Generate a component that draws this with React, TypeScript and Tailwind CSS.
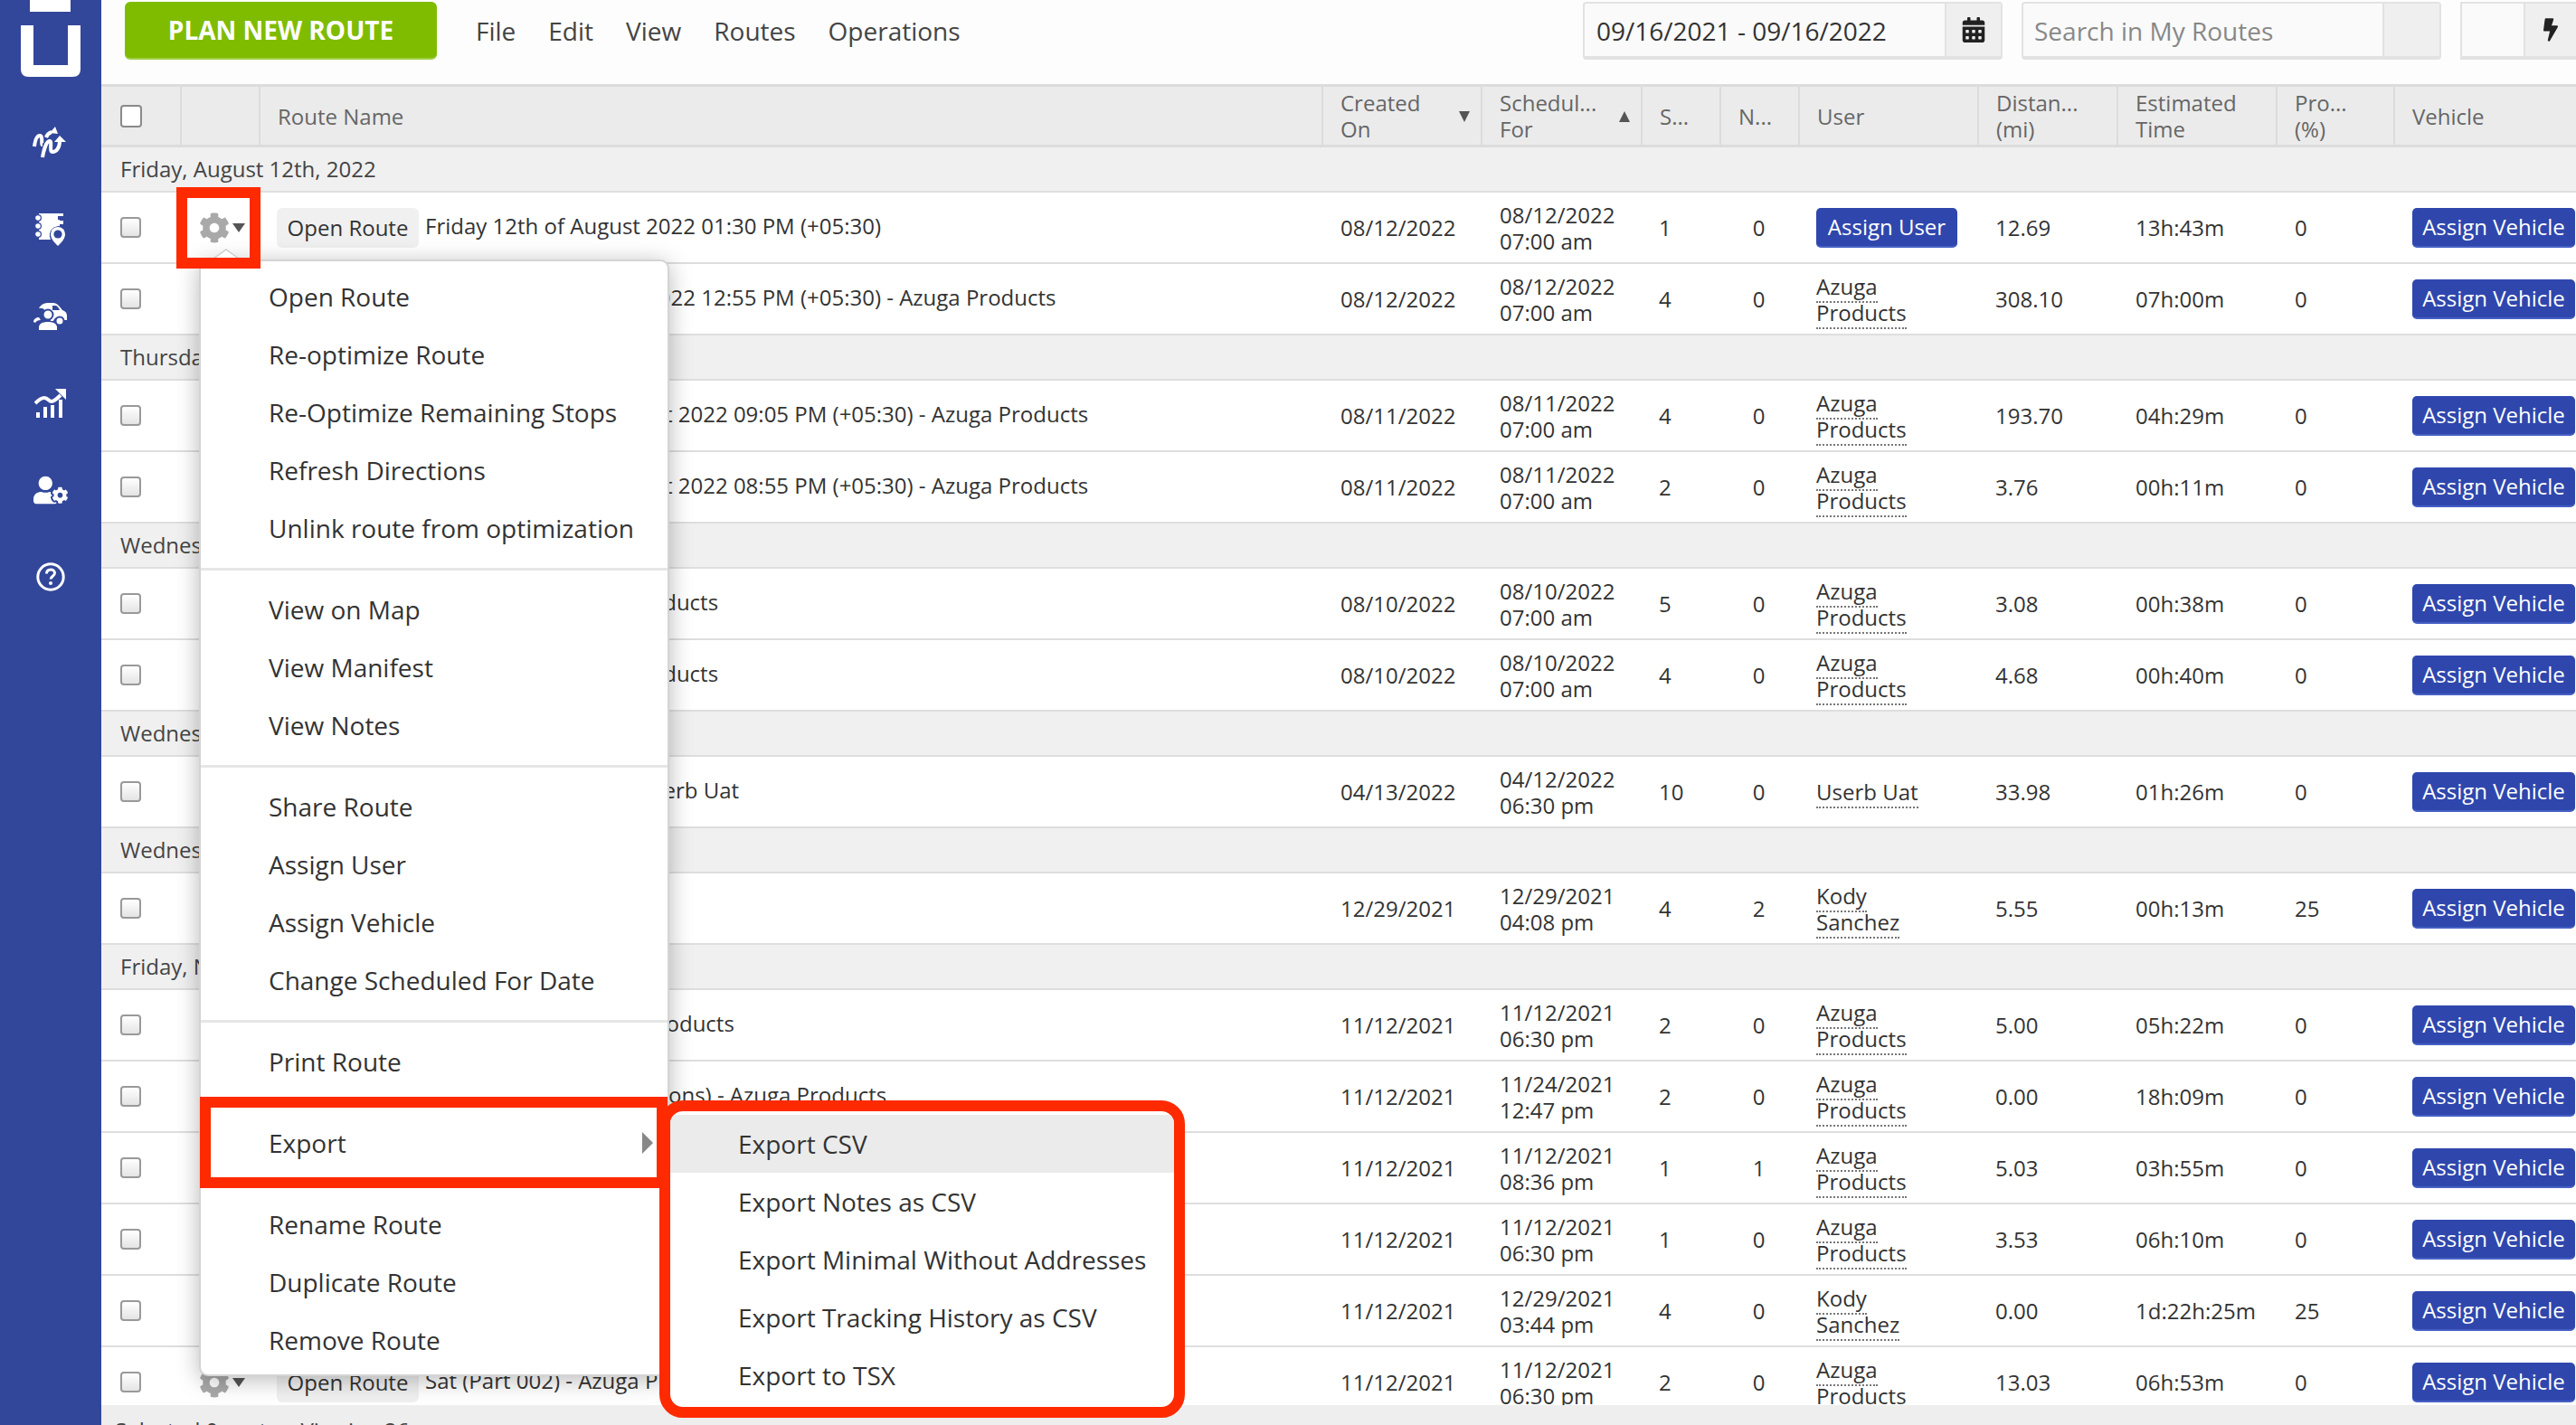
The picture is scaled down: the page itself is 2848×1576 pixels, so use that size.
import { FaBolt, FaCalendarAlt, FaCog, FaUserCog } from "react-icons/fa";

interface Route {
  name: string;
  created: string;
  date: string;
  time: string;
  stops: number;
  notes: number;
  user: string[] | null;
  distance: string;
  eta: string;
  progress: number;
}

interface Group {
  label: string;
  routes: Route[];
}

const AZUGA = ["Azuga", "Products"];
const KODY = ["Kody", "Sanchez"];

const groups: Group[] = [
  {
    label: "Friday, August 12th, 2022",
    routes: [
      { name: "Friday 12th of August 2022 01:30 PM (+05:30)", created: "08/12/2022", date: "08/12/2022", time: "07:00 am", stops: 1, notes: 0, user: null, distance: "12.69", eta: "13h:43m", progress: 0 },
      { name: "Friday 12th of August 2022 12:55 PM (+05:30) - Azuga Products", created: "08/12/2022", date: "08/12/2022", time: "07:00 am", stops: 4, notes: 0, user: AZUGA, distance: "308.10", eta: "07h:00m", progress: 0 },
    ],
  },
  {
    label: "Thursday, August 11th, 2022",
    routes: [
      { name: "Thursday 11th of August 2022 09:05 PM (+05:30) - Azuga Products", created: "08/11/2022", date: "08/11/2022", time: "07:00 am", stops: 4, notes: 0, user: AZUGA, distance: "193.70", eta: "04h:29m", progress: 0 },
      { name: "Thursday 11th of August 2022 08:55 PM (+05:30) - Azuga Products", created: "08/11/2022", date: "08/11/2022", time: "07:00 am", stops: 2, notes: 0, user: AZUGA, distance: "3.76", eta: "00h:11m", progress: 0 },
    ],
  },
  {
    label: "Wednesday, August 10th, 2022",
    routes: [
      { name: "Wed (Part1) - Azuga Products", created: "08/10/2022", date: "08/10/2022", time: "07:00 am", stops: 5, notes: 0, user: AZUGA, distance: "3.08", eta: "00h:38m", progress: 0 },
      { name: "Wed (Part2) - Azuga Products", created: "08/10/2022", date: "08/10/2022", time: "07:00 am", stops: 4, notes: 0, user: AZUGA, distance: "4.68", eta: "00h:40m", progress: 0 },
    ],
  },
  {
    label: "Wednesday, April 13th, 2022",
    routes: [
      { name: "Wed Apr 13th 2022 - Userb Uat", created: "04/13/2022", date: "04/12/2022", time: "06:30 pm", stops: 10, notes: 0, user: ["Userb Uat"], distance: "33.98", eta: "01h:26m", progress: 0 },
    ],
  },
  {
    label: "Wednesday, December 29th, 2021",
    routes: [
      { name: "Wed Dec 29th", created: "12/29/2021", date: "12/29/2021", time: "04:08 pm", stops: 4, notes: 2, user: KODY, distance: "5.55", eta: "00h:13m", progress: 25 },
    ],
  },
  {
    label: "Friday, November 12th, 2021",
    routes: [
      { name: "Fri (Route 01) - Azuga Products", created: "11/12/2021", date: "11/12/2021", time: "06:30 pm", stops: 2, notes: 0, user: AZUGA, distance: "5.00", eta: "05h:22m", progress: 0 },
      { name: "Fri Route (Optimize Options) - Azuga Products", created: "11/12/2021", date: "11/24/2021", time: "12:47 pm", stops: 2, notes: 0, user: AZUGA, distance: "0.00", eta: "18h:09m", progress: 0 },
      { name: "Fri (Part 03) - Azuga Products", created: "11/12/2021", date: "11/12/2021", time: "08:36 pm", stops: 1, notes: 1, user: AZUGA, distance: "5.03", eta: "03h:55m", progress: 0 },
      { name: "Fri (Part 04) - Azuga Products", created: "11/12/2021", date: "11/12/2021", time: "06:30 pm", stops: 1, notes: 0, user: AZUGA, distance: "3.53", eta: "06h:10m", progress: 0 },
      { name: "Fri (Part 05) - Azuga Products", created: "11/12/2021", date: "12/29/2021", time: "03:44 pm", stops: 4, notes: 0, user: KODY, distance: "0.00", eta: "1d:22h:25m", progress: 25 },
      { name: "Sat (Part 002) - Azuga Products", created: "11/12/2021", date: "11/12/2021", time: "06:30 pm", stops: 2, notes: 0, user: AZUGA, distance: "13.03", eta: "06h:53m", progress: 0 },
    ],
  },
];

const menuSections = [
  ["Open Route", "Re-optimize Route", "Re-Optimize Remaining Stops", "Refresh Directions", "Unlink route from optimization"],
  ["View on Map", "View Manifest", "View Notes"],
  ["Share Route", "Assign User", "Assign Vehicle", "Change Scheduled For Date"],
  ["Print Route"],
  ["Export"],
  ["Rename Route", "Duplicate Route", "Remove Route"],
];

const exportItems = ["Export CSV", "Export Notes as CSV", "Export Minimal Without Addresses", "Export Tracking History as CSV", "Export to TSX"];

const GRID = "grid grid-cols-[87px_87px_1175px_176px_177px_87px_87px_198px_154px_176px_130px_202px]";

function Checkbox({ header }: { header?: boolean }) {
  return (
    <span
      className={
        header
          ? "block w-[24px] h-[25px] rounded-[4px] border-2 border-[#8a8a8a] bg-white"
          : "block w-[23px] h-[23px] rounded-[4px] border-2 border-[#999] bg-gradient-to-b from-white to-[#e4e4e4]"
      }
    />
  );
}

function SortCaret({ up }: { up?: boolean }) {
  return (
    <svg width="14" height="14" viewBox="0 0 14 14" className="shrink-0 mt-[2px]">
      <path d={up ? "M7 1l6 12H1z" : "M1 1h12L7 13z"} fill="#555" />
    </svg>
  );
}

function HeaderCell({ lines, caret }: { lines: string[]; caret?: "up" | "down" }) {
  return (
    <div className="flex items-center justify-between pl-[19px] pr-[11px] border-l-2 border-[#dcdcdc] leading-[29px]">
      <div>
        {lines.map((line) => (
          <div key={line} className="whitespace-nowrap">{line}</div>
        ))}
      </div>
      {caret && <SortCaret up={caret === "up"} />}
    </div>
  );
}

function RouteRow({ route }: { route: Route }) {
  return (
    <div className={`${GRID} h-[79px] bg-white border-b-2 border-[#dedede] text-[#333] leading-[29px] items-center`}>
      <div className="pl-[21px]">
        <Checkbox />
      </div>
      <div className="flex items-center pl-[21px]">
        <FaCog className="text-[#a9a9a9] w-[34px] h-[34px]" />
        <svg width="14" height="10" viewBox="0 0 14 10" className="ml-[3px]">
          <path d="M0 0h14L7 10z" fill="#555" />
        </svg>
      </div>
      <div className="flex items-center pl-[20px] whitespace-nowrap overflow-hidden">
        <span className="h-[44px] w-[157px] flex items-center justify-center rounded-[6px] bg-[#f0f0f0]">Open Route</span>
        <span className="ml-[7px] mb-[5px]">{route.name}</span>
      </div>
      <div className="pl-[21px]">{route.created}</div>
      <div className="pl-[21px]">
        {route.date}
        <br />
        {route.time}
      </div>
      <div className="pl-[20px]">{route.stops}</div>
      <div className="text-center">{route.notes}</div>
      <div className="pl-[20px]">
        {route.user ? (
          route.user.map((part, i) => (
            <span key={part}>
              <span className="border-b-2 border-dotted border-[#777]">{part}</span>
              {i < route.user!.length - 1 && <br />}
            </span>
          ))
        ) : (
          <span className="flex items-center justify-center w-[156px] h-[44px] rounded-[5px] bg-[#2f47ad] border-b-2 border-[#4560c4] text-white">
            Assign User
          </span>
        )}
      </div>
      <div className="pl-[20px]">{route.distance}</div>
      <div className="pl-[21px] whitespace-nowrap">{route.eta}</div>
      <div className="pl-[21px]">{route.progress}</div>
      <div className="pl-[21px]">
        <span className="flex items-center justify-center w-[180px] h-[44px] rounded-[5px] bg-[#2f47ad] border-b-2 border-[#4560c4] text-white whitespace-nowrap">
          Assign Vehicle
        </span>
      </div>
    </div>
  );
}

function RoutesIcon() {
  return (
    <svg width="40" height="36" viewBox="0 0 40 36" fill="none" stroke="white" strokeWidth="4">
      <path d="M2 22c1-8 3-12 6-12 4 0 1 10 3 10" />
      <path d="M11 34c1-6 4-18 8-18 3 0 -1 12 3 12 4 0 8-4 8-12" />
      <path d="M15 12c1-3 3-5 6-6" />
      <path d="M19 7l6-7 3 8z" fill="white" stroke="none" />
      <path d="M24 17l6-7 7 7z" fill="white" stroke="none" />
    </svg>
  );
}

function NotebookPinIcon() {
  return (
    <svg width="36" height="36" viewBox="0 0 36 36">
      <path d="M5 0h23v14c-7 0-12 5-11 12l1 3H5z" fill="white" />
      <circle cx="4" cy="5" r="3.4" fill="white" stroke="#32479a" strokeWidth="1.2" />
      <circle cx="4" cy="14" r="3.4" fill="white" stroke="#32479a" strokeWidth="1.2" />
      <circle cx="4" cy="23" r="3.4" fill="white" stroke="#32479a" strokeWidth="1.2" />
      <rect x="26" y="3" width="5" height="4" fill="#32479a" />
      <rect x="28" y="0" width="4" height="3" fill="white" />
      <rect x="28" y="8" width="4" height="4" fill="white" />
      <path d="M26 36c-4-4-8-8-8-13a8 8 0 0 1 16 0c0 5-4 9-8 13z" fill="white" />
      <circle cx="26" cy="23" r="4.6" fill="#32479a" />
    </svg>
  );
}

function DriverCarIcon() {
  return (
    <svg width="38" height="32" viewBox="0 0 38 32">
      <path d="M6 7c2-4 6-6 10-6h6c4 0 7 4 10 8 3 1 5 3 5 6v5h-4a6 6 0 0 0-11 1h-3c0-3-2-6-5-7 0-5-3-8-8-7z" fill="white" />
      <path d="M21 4h3c2 0 4 2 5 5h-8z" fill="#32479a" />
      <circle cx="16" cy="14" r="5.5" fill="white" stroke="#32479a" strokeWidth="2" />
      <path d="M6 31v-3c0-4 4-6 10-6s10 2 10 6v3z" fill="white" />
      <path d="M0 22c0-3 3-5 6-5 1 1 1 2 2 3-3 0-5 1-6 3z" fill="white" />
      <circle cx="29" cy="21" r="4.5" fill="white" stroke="#32479a" strokeWidth="2" />
    </svg>
  );
}

function GrowthIcon() {
  return (
    <svg width="36" height="32" viewBox="0 0 36 32">
      <path d="M1 16c5-5 7-6 10-6 4 0 5 4 8 4 3 0 6-3 10-7" fill="none" stroke="white" strokeWidth="4" />
      <path d="M23 0h12v12z" fill="white" />
      <rect x="2" y="26" width="4" height="6" fill="white" />
      <rect x="10" y="20" width="4" height="12" fill="white" />
      <rect x="18" y="18" width="4" height="14" fill="white" />
      <rect x="27" y="12" width="4" height="20" fill="white" />
    </svg>
  );
}

function HelpIcon() {
  return (
    <svg width="32" height="32" viewBox="0 0 32 32" fill="none" stroke="white">
      <circle cx="16" cy="16" r="14.2" strokeWidth="3" />
      <path d="M11.5 12.5c0-3 2-4.500 4.600-4.500s4.400 1.600 4.400 3.800c0 3.400-4.400 3.400-4.400 6.700" strokeWidth="3" />
      <circle cx="16" cy="23" r="2" fill="white" stroke="none" />
    </svg>
  );
}

function Sidebar() {
  return (
    <aside className="w-[112px] shrink-0 bg-[#32479a] flex flex-col items-center">
      <svg width="112" height="100" viewBox="0 0 112 100" className="shrink-0">
        <path d="M33 0h45v13H33z" fill="white" />
        <path d="M23 28h14v44h38V28h14v48c0 6-3 9-9 9H32c-6 0-9-3-9-9z" fill="white" />
      </svg>
      <div className="flex flex-col items-center mt-[10px]">
        <div className="h-[96px] flex items-center"><RoutesIcon /></div>
        <div className="h-[96px] flex items-center"><NotebookPinIcon /></div>
        <div className="h-[96px] flex items-center"><DriverCarIcon /></div>
        <div className="h-[96px] flex items-center"><GrowthIcon /></div>
        <div className="h-[96px] flex items-center"><FaUserCog className="text-white w-[38px] h-[32px]" /></div>
        <div className="h-[96px] flex items-center"><HelpIcon /></div>
      </div>
    </aside>
  );
}

function TopBar() {
  return (
    <div className="h-[93px] shrink-0 flex items-start pt-[2px] bg-[#fdfdfd] text-[28px] text-[#444]">
      <button className="ml-[26px] w-[345px] h-[64px] rounded-[6px] bg-[#7fbc00] text-white font-bold border-b-2 border-[#9fce4a]">
        PLAN NEW ROUTE
      </button>
      <nav className="ml-[43px] h-[64px] flex items-center gap-[36px]">
        <span>File</span>
        <span>Edit</span>
        <span>View</span>
        <span>Routes</span>
        <span>Operations</span>
      </nav>
      <div className="ml-auto flex">
        <div className="flex h-[64px] border-2 border-b-4 border-[#e2e2e2] rounded-[4px] bg-[#fafafa]">
          <div className="w-[398px] pl-[13px] pt-[2px] flex items-center text-[#333]">09/16/2021 - 09/16/2022</div>
          <div className="w-[62px] flex items-center justify-center bg-[#efefef] border-l-2 border-[#e2e2e2]">
            <FaCalendarAlt className="w-[26px] h-[28px] text-[#222]" />
          </div>
        </div>
        <div className="ml-[21px] flex h-[64px] border-2 border-b-4 border-[#e2e2e2] rounded-[4px] bg-[#fafafa]">
          <div className="w-[397px] pl-[12px] pt-[2px] flex items-center text-[#888]">Search in My Routes</div>
          <div className="w-[63px] bg-[#efefef] border-l-2 border-[#e2e2e2]" />
        </div>
        <div className="ml-[21px] flex h-[64px] w-[128px] border-y-2 border-l-2 border-b-4 border-[#e2e2e2] bg-[#fafafa]">
          <div className="w-[68px]" />
          <div className="flex-1 flex items-center justify-center bg-[#efefef] border-l-2 border-[#e2e2e2]">
            <FaBolt className="w-[16px] h-[28px] text-[#222]" />
          </div>
        </div>
      </div>
    </div>
  );
}

function RouteTable() {
  return (
    <div className="flex-1 min-h-0 overflow-hidden text-[24px]">
      <div className={`${GRID} h-[70px] bg-[#ebebeb] border-y-[3px] border-[#dcdcdc] text-[#666]`}>
        <div className="flex items-center pl-[21px]">
          <Checkbox header />
        </div>
        <div className="border-l-2 border-[#dcdcdc]" />
        <HeaderCell lines={["Route Name"]} />
        <HeaderCell lines={["Created", "On"]} caret="down" />
        <HeaderCell lines={["Schedul...", "For"]} caret="up" />
        <HeaderCell lines={["S..."]} />
        <HeaderCell lines={["N..."]} />
        <HeaderCell lines={["User"]} />
        <HeaderCell lines={["Distan...", "(mi)"]} />
        <HeaderCell lines={["Estimated", "Time"]} />
        <HeaderCell lines={["Pro...", "(%)"]} />
        <HeaderCell lines={["Vehicle"]} />
      </div>
      {groups.map((group) => (
        <div key={group.label}>
          <div className="h-[50px] flex items-center pl-[21px] bg-[#f0f0f0] border-b-2 border-[#dedede] text-[#444]">
            {group.label}
          </div>
          {group.routes.map((route) => (
            <RouteRow key={route.name} route={route} />
          ))}
        </div>
      ))}
    </div>
  );
}

function ActionsMenu() {
  return (
    <>
      <div className="absolute left-[220px] top-[287px] w-[520px] h-[1235px] pt-[7px] bg-white rounded-[10px] border-2 border-[#d4d4d4] shadow-[0_4px_26px_rgba(0,0,0,0.28)] text-[28px] text-[#333]">
        {menuSections.map((section, i) => (
          <div key={section[0]}>
            {i > 0 && <div className="h-[26px] flex items-center"><div className="w-full h-[3px] bg-[#e6e6e6]" /></div>}
            {section.map((item) => (
              <div key={item} className="h-[64px] flex items-center justify-between pl-[75px] pr-[16px] whitespace-nowrap">
                {item}
                {item === "Export" && (
                  <svg width="12" height="24" viewBox="0 0 12 24">
                    <path d="M0 0l12 12L0 24z" fill="#888" />
                  </svg>
                )}
              </div>
            ))}
          </div>
        ))}
      </div>
      <svg width="36" height="14" viewBox="0 0 36 14" className="absolute left-[232px] top-[275px]">
        <path d="M0 14L18 1l18 13" fill="white" stroke="#cfcfcf" strokeWidth="1.500" />
      </svg>
      {/* red call-outs drawn over the screenshot */}
      <div className="absolute left-[195px] top-[207px] w-[93px] h-[90px] border-[12px] border-[#ff2a00]" />
      <div className="absolute left-[221px] top-[1213px] w-[517px] h-[101px] border-[12px] border-[#ff2a00]" />
      <div className="absolute left-[729px] top-[1217px] w-[581px] h-[351px] border-[12px] border-[#ff2a00] rounded-[26px] bg-white pt-[4px] text-[28px] text-[#333] overflow-hidden">
        {exportItems.map((item, i) => (
          <div key={item} className={`h-[64px] flex items-center pl-[75px] whitespace-nowrap ${i === 0 ? "bg-[#ebebeb]" : ""}`}>
            {item}
          </div>
        ))}
      </div>
    </>
  );
}

export default function App() {
  return (
    <div className="relative flex h-[1576px] w-[2848px] overflow-hidden bg-white font-['Open_Sans',sans-serif]">
      <Sidebar />
      <main className="flex-1 min-w-0 flex flex-col">
        <TopBar />
        <RouteTable />
        <div className="h-[22px] shrink-0 bg-[#eeeeee] overflow-hidden pl-[15px] pt-[13px] text-[24px] leading-[29px] text-[#444]">
          Selected 0 routes, Viewing 26
        </div>
      </main>
      <ActionsMenu />
    </div>
  );
}
